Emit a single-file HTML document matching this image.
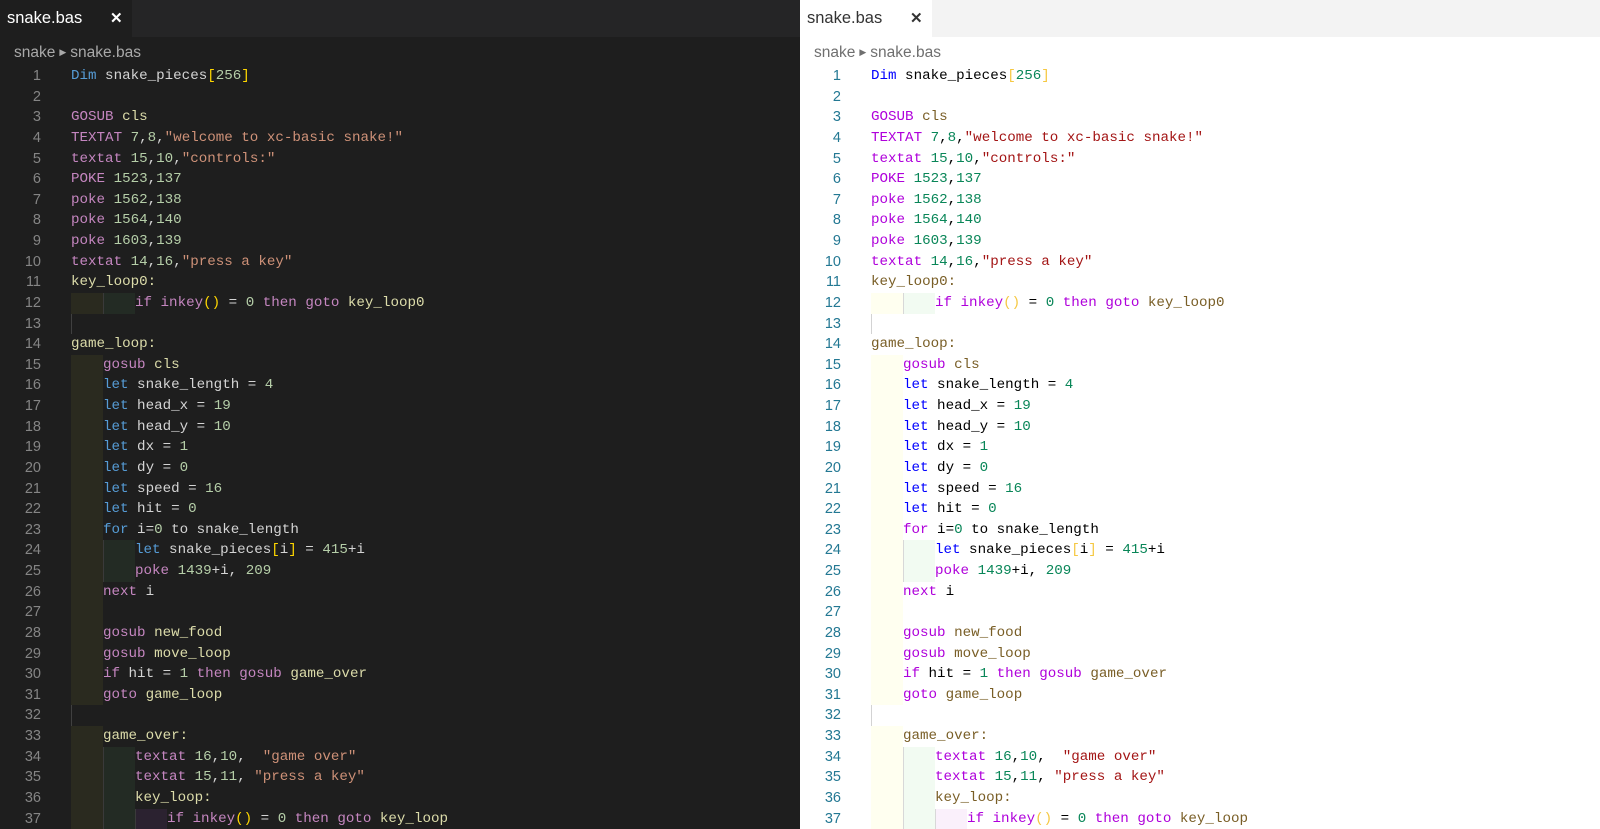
<!DOCTYPE html>
<html><head><meta charset="utf-8"><style>
*{margin:0;padding:0;box-sizing:border-box}
body{width:1600px;height:829px;overflow:hidden;position:relative;font-family:"Liberation Sans",sans-serif}
.pane{position:absolute;top:0;height:829px;width:800px;overflow:hidden}
#L{left:0;background:#1e1e1e}
#R{left:800px;background:#fff}
.bar{position:absolute;left:0;top:0;width:800px;height:37px}
#L .bar{background:#252526}
#R .bar{background:#f3f3f3}
.tab{position:absolute;left:0;top:0;width:132px;height:37px;font-size:16.5px;line-height:37px;padding-left:7px}
#L .tab{background:#1e1e1e;color:#fff}
#R .tab{background:#fff;color:#333}
.tab .x{position:absolute;left:110px;top:0;font-size:15px;font-weight:bold}
.crumb{position:absolute;left:14px;top:42px;font-size:15.5px;line-height:20px}
#L .crumb{color:#a9a9a9}
#R .crumb{color:#6f6f6f}
.crumb .ar{font-size:9px;vertical-align:2px;margin:0 4px}
.code{position:absolute;left:0;top:66px;width:800px;font-family:"Liberation Mono",monospace;font-size:14.2px}
.ln{display:block;height:20.63px;line-height:20.63px;position:relative;white-space:pre}
.ln .no{position:absolute;left:0;width:41px;text-align:right;font-family:"Liberation Sans",sans-serif;font-size:14.5px}
.ln .t{position:absolute;left:71px;top:0;height:20.63px;right:0}
#L .no{color:#858585}
#R .no{color:#237893}
#L .t{color:#d4d4d4}
#R .t{color:#000}
#L .k,#L .fo{color:#569cd6}#R .k{color:#0000ff}#R .fo{color:#af00db}
#L .p{color:#c586c0}#R .p{color:#af00db}
#L .f{color:#dcdcaa}#R .f{color:#795e26}
#L .n{color:#b5cea8}#R .n{color:#098658}
#L .s{color:#ce9178}#R .s{color:#a31515}
#L .b{color:#ffd700}#R .b{color:#f5c842}
.i1{padding-left:32px}.i2{padding-left:64px}.i3{padding-left:96px}
#L .g1 .t{background:linear-gradient(to right,#2a2a1f 0 32px,transparent 32px)}
#L .g2 .t{background:linear-gradient(to right,#2a2a1f 0 32px,#3a3a3a 32px 33px,#232b24 33px 64px,transparent 64px)}
#L .g3 .t{background:linear-gradient(to right,#2a2a1f 0 32px,#3a3a3a 32px 33px,#232b24 33px 64px,#3a3a3a 64px 65px,#2b2230 65px 96px,transparent 96px)}
#L .gl .t{background:linear-gradient(to right,#404040 0 1px,transparent 1px)}
#R .g1 .t{background:linear-gradient(to right,#fffff0 0 32px,transparent 32px)}
#R .g2 .t{background:linear-gradient(to right,#fffff0 0 32px,#d8d8d8 32px 33px,#f2fbf2 33px 64px,transparent 64px)}
#R .g3 .t{background:linear-gradient(to right,#fffff0 0 32px,#d8d8d8 32px 33px,#f2fbf2 33px 64px,#d8d8d8 64px 65px,#faf0fb 65px 96px,transparent 96px)}
#R .gl .t{background:linear-gradient(to right,#d3d3d3 0 1px,transparent 1px)}
</style></head><body>

<div class="pane" id="L">
<div class="bar"><div class="tab">snake.bas<span class="x">✕</span></div></div>
<div class="crumb">snake<span class="ar">▶</span>snake.bas</div>
<div class="code">
<div class="ln"><span class="no">1</span><span class="t"><span class="k">Dim</span> snake_pieces<span class="b">[</span><span class="n">256</span><span class="b">]</span></span></div>
<div class="ln"><span class="no">2</span><span class="t"></span></div>
<div class="ln"><span class="no">3</span><span class="t"><span class="p">GOSUB</span> <span class="f">cls</span></span></div>
<div class="ln"><span class="no">4</span><span class="t"><span class="p">TEXTAT</span> <span class="n">7</span>,<span class="n">8</span>,<span class="s">"welcome to xc-basic snake!"</span></span></div>
<div class="ln"><span class="no">5</span><span class="t"><span class="p">textat</span> <span class="n">15</span>,<span class="n">10</span>,<span class="s">"controls:"</span></span></div>
<div class="ln"><span class="no">6</span><span class="t"><span class="p">POKE</span> <span class="n">1523</span>,<span class="n">137</span></span></div>
<div class="ln"><span class="no">7</span><span class="t"><span class="p">poke</span> <span class="n">1562</span>,<span class="n">138</span></span></div>
<div class="ln"><span class="no">8</span><span class="t"><span class="p">poke</span> <span class="n">1564</span>,<span class="n">140</span></span></div>
<div class="ln"><span class="no">9</span><span class="t"><span class="p">poke</span> <span class="n">1603</span>,<span class="n">139</span></span></div>
<div class="ln"><span class="no">10</span><span class="t"><span class="p">textat</span> <span class="n">14</span>,<span class="n">16</span>,<span class="s">"press a key"</span></span></div>
<div class="ln"><span class="no">11</span><span class="t"><span class="f">key_loop0:</span></span></div>
<div class="ln g2"><span class="no">12</span><span class="t i2"><span class="p">if</span> <span class="p">inkey</span><span class="b">()</span> = <span class="n">0</span> <span class="p">then</span> <span class="p">goto</span> <span class="f">key_loop0</span></span></div>
<div class="ln gl"><span class="no">13</span><span class="t"></span></div>
<div class="ln"><span class="no">14</span><span class="t"><span class="f">game_loop:</span></span></div>
<div class="ln g1"><span class="no">15</span><span class="t i1"><span class="p">gosub</span> <span class="f">cls</span></span></div>
<div class="ln g1"><span class="no">16</span><span class="t i1"><span class="k">let</span> snake_length = <span class="n">4</span></span></div>
<div class="ln g1"><span class="no">17</span><span class="t i1"><span class="k">let</span> head_x = <span class="n">19</span></span></div>
<div class="ln g1"><span class="no">18</span><span class="t i1"><span class="k">let</span> head_y = <span class="n">10</span></span></div>
<div class="ln g1"><span class="no">19</span><span class="t i1"><span class="k">let</span> dx = <span class="n">1</span></span></div>
<div class="ln g1"><span class="no">20</span><span class="t i1"><span class="k">let</span> dy = <span class="n">0</span></span></div>
<div class="ln g1"><span class="no">21</span><span class="t i1"><span class="k">let</span> speed = <span class="n">16</span></span></div>
<div class="ln g1"><span class="no">22</span><span class="t i1"><span class="k">let</span> hit = <span class="n">0</span></span></div>
<div class="ln g1"><span class="no">23</span><span class="t i1"><span class="fo">for</span> i=<span class="n">0</span> to snake_length</span></div>
<div class="ln g2"><span class="no">24</span><span class="t i2"><span class="k">let</span> snake_pieces<span class="b">[</span>i<span class="b">]</span> = <span class="n">415</span>+i</span></div>
<div class="ln g2"><span class="no">25</span><span class="t i2"><span class="p">poke</span> <span class="n">1439</span>+i, <span class="n">209</span></span></div>
<div class="ln g1"><span class="no">26</span><span class="t i1"><span class="p">next</span> i</span></div>
<div class="ln g1"><span class="no">27</span><span class="t i1"></span></div>
<div class="ln g1"><span class="no">28</span><span class="t i1"><span class="p">gosub</span> <span class="f">new_food</span></span></div>
<div class="ln g1"><span class="no">29</span><span class="t i1"><span class="p">gosub</span> <span class="f">move_loop</span></span></div>
<div class="ln g1"><span class="no">30</span><span class="t i1"><span class="p">if</span> hit = <span class="n">1</span> <span class="p">then</span> <span class="p">gosub</span> <span class="f">game_over</span></span></div>
<div class="ln g1"><span class="no">31</span><span class="t i1"><span class="p">goto</span> <span class="f">game_loop</span></span></div>
<div class="ln gl"><span class="no">32</span><span class="t"></span></div>
<div class="ln g1"><span class="no">33</span><span class="t i1"><span class="f">game_over:</span></span></div>
<div class="ln g2"><span class="no">34</span><span class="t i2"><span class="p">textat</span> <span class="n">16</span>,<span class="n">10</span>,  <span class="s">"game over"</span></span></div>
<div class="ln g2"><span class="no">35</span><span class="t i2"><span class="p">textat</span> <span class="n">15</span>,<span class="n">11</span>, <span class="s">"press a key"</span></span></div>
<div class="ln g2"><span class="no">36</span><span class="t i2"><span class="f">key_loop:</span></span></div>
<div class="ln g3"><span class="no">37</span><span class="t i3"><span class="p">if</span> <span class="p">inkey</span><span class="b">()</span> = <span class="n">0</span> <span class="p">then</span> <span class="p">goto</span> <span class="f">key_loop</span></span></div>
</div>
</div>

<div class="pane" id="R">
<div class="bar"><div class="tab">snake.bas<span class="x">✕</span></div></div>
<div class="crumb">snake<span class="ar">▶</span>snake.bas</div>
<div class="code">
<div class="ln"><span class="no">1</span><span class="t"><span class="k">Dim</span> snake_pieces<span class="b">[</span><span class="n">256</span><span class="b">]</span></span></div>
<div class="ln"><span class="no">2</span><span class="t"></span></div>
<div class="ln"><span class="no">3</span><span class="t"><span class="p">GOSUB</span> <span class="f">cls</span></span></div>
<div class="ln"><span class="no">4</span><span class="t"><span class="p">TEXTAT</span> <span class="n">7</span>,<span class="n">8</span>,<span class="s">"welcome to xc-basic snake!"</span></span></div>
<div class="ln"><span class="no">5</span><span class="t"><span class="p">textat</span> <span class="n">15</span>,<span class="n">10</span>,<span class="s">"controls:"</span></span></div>
<div class="ln"><span class="no">6</span><span class="t"><span class="p">POKE</span> <span class="n">1523</span>,<span class="n">137</span></span></div>
<div class="ln"><span class="no">7</span><span class="t"><span class="p">poke</span> <span class="n">1562</span>,<span class="n">138</span></span></div>
<div class="ln"><span class="no">8</span><span class="t"><span class="p">poke</span> <span class="n">1564</span>,<span class="n">140</span></span></div>
<div class="ln"><span class="no">9</span><span class="t"><span class="p">poke</span> <span class="n">1603</span>,<span class="n">139</span></span></div>
<div class="ln"><span class="no">10</span><span class="t"><span class="p">textat</span> <span class="n">14</span>,<span class="n">16</span>,<span class="s">"press a key"</span></span></div>
<div class="ln"><span class="no">11</span><span class="t"><span class="f">key_loop0:</span></span></div>
<div class="ln g2"><span class="no">12</span><span class="t i2"><span class="p">if</span> <span class="p">inkey</span><span class="b">()</span> = <span class="n">0</span> <span class="p">then</span> <span class="p">goto</span> <span class="f">key_loop0</span></span></div>
<div class="ln gl"><span class="no">13</span><span class="t"></span></div>
<div class="ln"><span class="no">14</span><span class="t"><span class="f">game_loop:</span></span></div>
<div class="ln g1"><span class="no">15</span><span class="t i1"><span class="p">gosub</span> <span class="f">cls</span></span></div>
<div class="ln g1"><span class="no">16</span><span class="t i1"><span class="k">let</span> snake_length = <span class="n">4</span></span></div>
<div class="ln g1"><span class="no">17</span><span class="t i1"><span class="k">let</span> head_x = <span class="n">19</span></span></div>
<div class="ln g1"><span class="no">18</span><span class="t i1"><span class="k">let</span> head_y = <span class="n">10</span></span></div>
<div class="ln g1"><span class="no">19</span><span class="t i1"><span class="k">let</span> dx = <span class="n">1</span></span></div>
<div class="ln g1"><span class="no">20</span><span class="t i1"><span class="k">let</span> dy = <span class="n">0</span></span></div>
<div class="ln g1"><span class="no">21</span><span class="t i1"><span class="k">let</span> speed = <span class="n">16</span></span></div>
<div class="ln g1"><span class="no">22</span><span class="t i1"><span class="k">let</span> hit = <span class="n">0</span></span></div>
<div class="ln g1"><span class="no">23</span><span class="t i1"><span class="fo">for</span> i=<span class="n">0</span> to snake_length</span></div>
<div class="ln g2"><span class="no">24</span><span class="t i2"><span class="k">let</span> snake_pieces<span class="b">[</span>i<span class="b">]</span> = <span class="n">415</span>+i</span></div>
<div class="ln g2"><span class="no">25</span><span class="t i2"><span class="p">poke</span> <span class="n">1439</span>+i, <span class="n">209</span></span></div>
<div class="ln g1"><span class="no">26</span><span class="t i1"><span class="p">next</span> i</span></div>
<div class="ln g1"><span class="no">27</span><span class="t i1"></span></div>
<div class="ln g1"><span class="no">28</span><span class="t i1"><span class="p">gosub</span> <span class="f">new_food</span></span></div>
<div class="ln g1"><span class="no">29</span><span class="t i1"><span class="p">gosub</span> <span class="f">move_loop</span></span></div>
<div class="ln g1"><span class="no">30</span><span class="t i1"><span class="p">if</span> hit = <span class="n">1</span> <span class="p">then</span> <span class="p">gosub</span> <span class="f">game_over</span></span></div>
<div class="ln g1"><span class="no">31</span><span class="t i1"><span class="p">goto</span> <span class="f">game_loop</span></span></div>
<div class="ln gl"><span class="no">32</span><span class="t"></span></div>
<div class="ln g1"><span class="no">33</span><span class="t i1"><span class="f">game_over:</span></span></div>
<div class="ln g2"><span class="no">34</span><span class="t i2"><span class="p">textat</span> <span class="n">16</span>,<span class="n">10</span>,  <span class="s">"game over"</span></span></div>
<div class="ln g2"><span class="no">35</span><span class="t i2"><span class="p">textat</span> <span class="n">15</span>,<span class="n">11</span>, <span class="s">"press a key"</span></span></div>
<div class="ln g2"><span class="no">36</span><span class="t i2"><span class="f">key_loop:</span></span></div>
<div class="ln g3"><span class="no">37</span><span class="t i3"><span class="p">if</span> <span class="p">inkey</span><span class="b">()</span> = <span class="n">0</span> <span class="p">then</span> <span class="p">goto</span> <span class="f">key_loop</span></span></div>
</div>
</div>
</body></html>
